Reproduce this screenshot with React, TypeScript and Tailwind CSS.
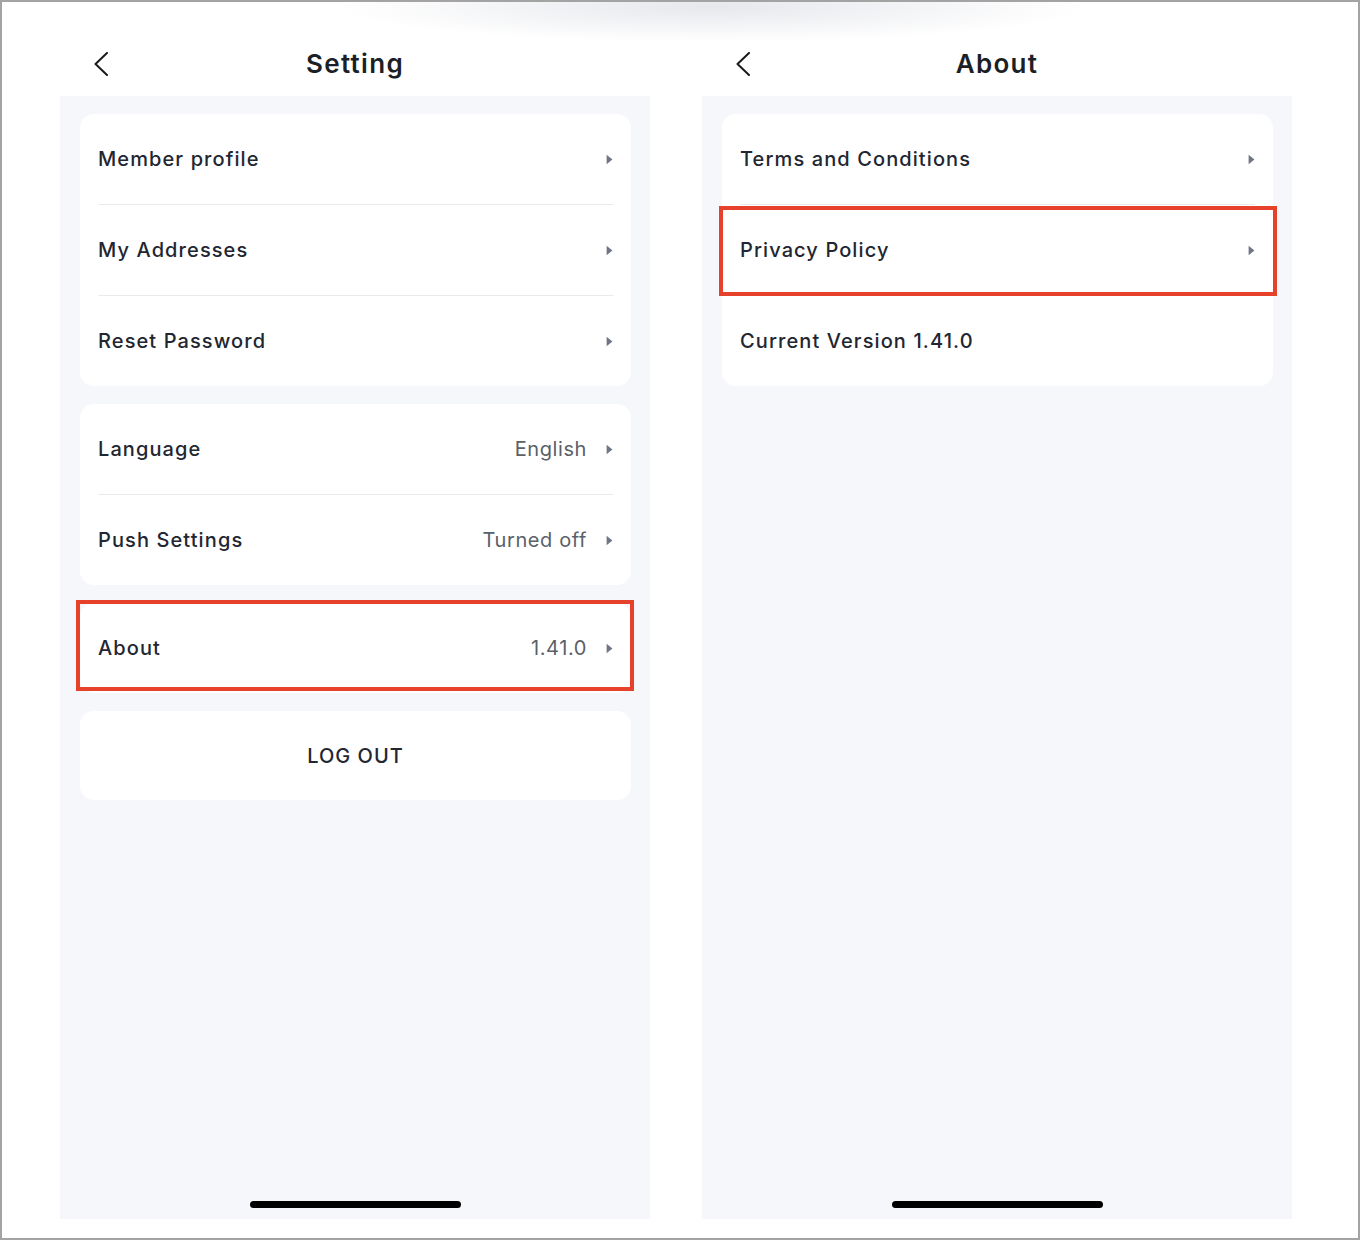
import type { ReactNode } from 'react'

type Row = {
  label: string
  value?: string
  arrow?: boolean
  highlight?: boolean
}

const font = { fontFamily: 'Inter, "Noto Sans", "Liberation Sans", sans-serif' }

function BackIcon() {
  return (
    <svg width="16" height="24" viewBox="0 0 16 24" fill="none" className="block">
      <polyline points="14,1 2.5,12 14,23" stroke="#1a1a1a" strokeWidth="2" strokeLinecap="round" strokeLinejoin="round" />
    </svg>
  )
}

function Caret() {
  return (
    <svg width="7" height="11" viewBox="0 0 7 11" className="block shrink-0">
      <path d="M0.6 0.8 L6.4 5.5 L0.6 10.2 Z" fill="#6f7586" />
    </svg>
  )
}

function Header({ title }: { title: string }) {
  return (
    <div className="relative h-[94px] flex justify-center pt-[45px]">
      <div className="absolute left-[33px] top-[50px]">
        <BackIcon />
      </div>
      <h1 className="h-[34px] leading-[34px] text-[26px] font-semibold tracking-[1.3px] text-[#1c1f26]">{title}</h1>
    </div>
  )
}

function Card({ children }: { children: ReactNode }) {
  return <div className="bg-white rounded-[14px] px-[18px]">{children}</div>
}

function RowItem({ row, last }: { row: Row; last: boolean }) {
  return (
    <div className={`relative flex items-center ${last ? 'h-[90px]' : 'h-[91px] border-b border-[#e9eaee]'}`}>
      <span className="flex-1 text-[20px] font-medium tracking-[1.1px] text-[#222631]">{row.label}</span>
      {row.value && <span className="text-[20px] tracking-[0.6px] text-[#5a5f69] mr-[19px]">{row.value}</span>}
      {row.arrow && <Caret />}
      {row.highlight && (
        <div className="absolute -left-[21px] -right-[22px] top-[1px] bottom-[-1px] border-[4px] border-[#e5412b]" />
      )}
    </div>
  )
}

function RowCard({ rows, highlight }: { rows: Row[]; highlight?: boolean }) {
  return (
    <div className="relative">
      <Card>
        {rows.map((r, i) => (
          <RowItem key={r.label} row={r} last={i === rows.length - 1} />
        ))}
      </Card>
      {highlight && <div className="absolute -left-[4px] -right-[3px] -top-[3px] bottom-[2px] border-[4px] border-[#e5412b]" />}
    </div>
  )
}

function HomeBar() {
  return (
    <div className="mt-auto mb-[11px] flex justify-center">
      <div className="w-[211px] h-[7px] rounded-full bg-black" />
    </div>
  )
}

function Phone({ title, children }: { title: string; children: ReactNode }) {
  return (
    <div className="w-[590px] flex flex-col">
      <Header title={title} />
      <div className="h-[1123px] bg-[#f6f7fb] pl-[20px] pr-[19px] pt-[18px] flex flex-col">
        <div className="flex flex-col gap-[18px]">{children}</div>
        <HomeBar />
      </div>
    </div>
  )
}

export default function App() {
  return (
    <div style={font} className="relative w-[1360px] h-[1240px] bg-white border-2 border-[#a3a3a3] overflow-hidden">
      <div className="absolute left-[330px] -top-[30px] w-[760px] h-[70px] rounded-[50%] bg-[radial-gradient(ellipse_at_center,rgba(200,204,214,0.45),rgba(255,255,255,0)_70%)]" />
      <div className="relative flex pl-[58px] gap-[52px]">
        <Phone title="Setting">
          <RowCard
            rows={[
              { label: 'Member profile', arrow: true },
              { label: 'My Addresses', arrow: true },
              { label: 'Reset Password', arrow: true },
            ]}
          />
          <RowCard
            rows={[
              { label: 'Language', value: 'English', arrow: true },
              { label: 'Push Settings', value: 'Turned off', arrow: true },
            ]}
          />
          <RowCard rows={[{ label: 'About', value: '1.41.0', arrow: true }]} highlight />
          <div className="bg-white rounded-[14px] h-[89px] flex items-center justify-center">
            <span className="text-[20px] font-medium tracking-[1px] text-[#222631]">LOG OUT</span>
          </div>
        </Phone>
        <Phone title="About">
          <RowCard
            rows={[
              { label: 'Terms and Conditions', arrow: true },
              { label: 'Privacy Policy', arrow: true, highlight: true },
              { label: 'Current Version 1.41.0' },
            ]}
          />
        </Phone>
      </div>
    </div>
  )
}
